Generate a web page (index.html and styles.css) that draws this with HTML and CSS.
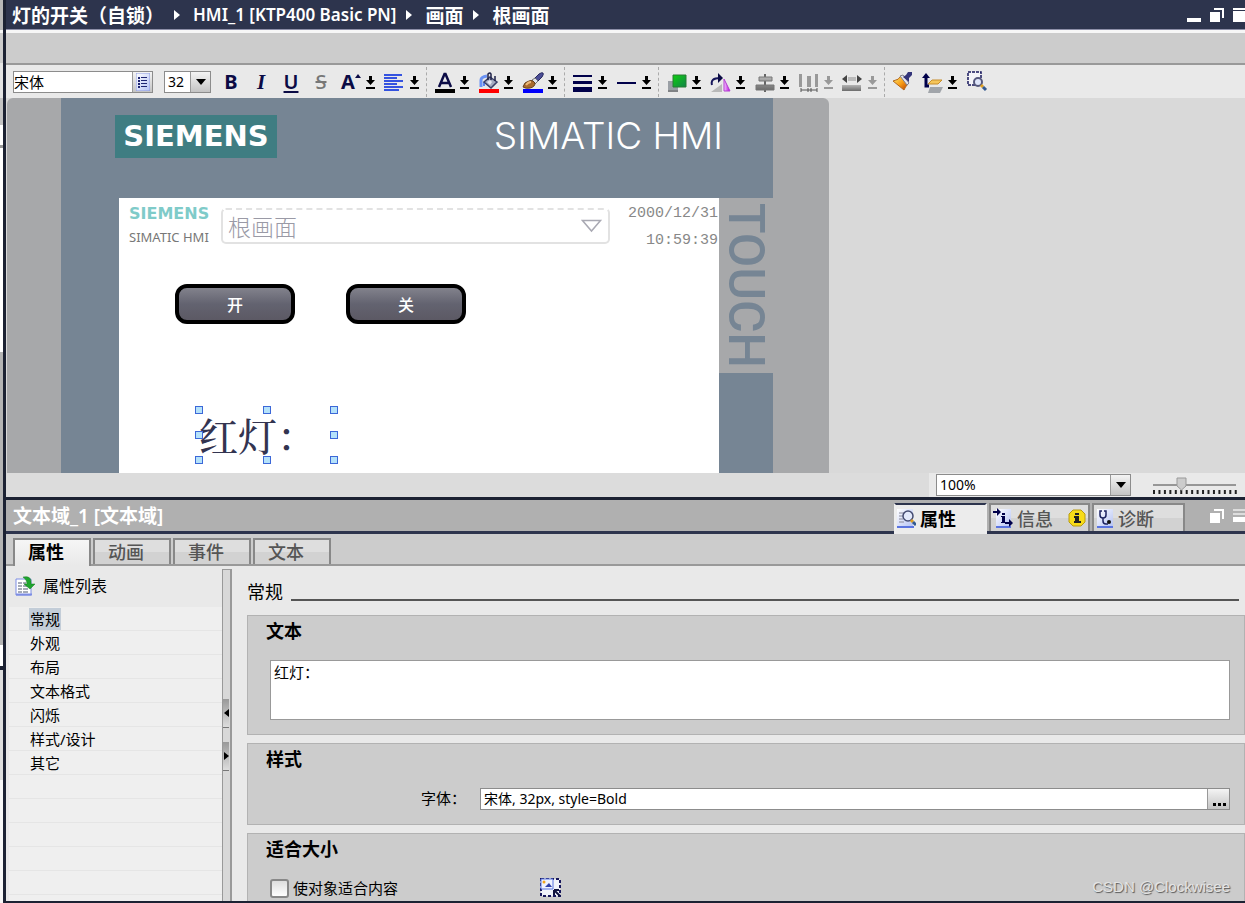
FILE: index.html
```html
<!DOCTYPE html>
<html lang="zh-CN">
<head>
<meta charset="utf-8">
<title>HMI_1 [KTP400 Basic PN]</title>
<link rel="stylesheet" href="styles.css">
</head>
<body>
<svg class="defs" aria-hidden="true">
  <defs>
    <linearGradient id="g-green" x1="0" y1="0" x2="1" y2="1"><stop offset="0" stop-color="#0fd00f"/><stop offset="1" stop-color="#12834a"/></linearGradient>
    <linearGradient id="g-steel" x1="0" y1="0" x2="0" y2="1"><stop offset="0" stop-color="#b4b4b4"/><stop offset="1" stop-color="#6c6c6c"/></linearGradient>
    <linearGradient id="g-violet" x1="0" y1="0" x2="1" y2="0"><stop offset="0" stop-color="#f7c8ff"/><stop offset="1" stop-color="#b400dc"/></linearGradient>
    <linearGradient id="g-fire" x1="0" y1="0" x2="1" y2="1"><stop offset="0" stop-color="#fff27a"/><stop offset=".55" stop-color="#f79a14"/><stop offset="1" stop-color="#b53a00"/></linearGradient>
    <linearGradient id="g-page" x1="0" y1="0" x2="1" y2="1"><stop offset="0" stop-color="#ffffff"/><stop offset="1" stop-color="#b4c2f4"/></linearGradient>
    <symbol id="drop" viewBox="0 0 12 22"><path d="M5 5h3v4h3l-4.500 5-4.500-5h3zM2 16h9v2H2z"/></symbol>
    <symbol id="tri" viewBox="0 0 10 6"><path d="M0 0h10L5 6z"/></symbol>
    <symbol id="restore" viewBox="0 0 14 14"><path d="M4 0h10v10h-2V2H4zM0 4h10v10H0z" fill="#fff"/></symbol>
  </defs>
</svg>
<div class="app">
  <div class="edge"></div>
  <main class="workspace">
    <header class="titlebar">
      <nav class="crumbs">
        <span class="cjk">灯的开关（自锁）</span><i class="chev"></i>
        <span class="latin">HMI_1 [KTP400 Basic PN]</span><i class="chev"></i>
        <span class="cjk">画面</span><i class="chev"></i>
        <span class="cjk">根画面</span>
      </nav>
      <div class="window-buttons">
        <button aria-label="最小化"><svg width="14" height="14"><path d="M0 10h14v4H0z" fill="#fff"/></svg></button>
        <button aria-label="还原"><svg width="14" height="14"><use href="#restore"/></svg></button>
        <button aria-label="最大化"><svg width="14" height="14"><path d="M0 0h14v2H0zM0 3h14v11H0z" fill="#fff"/></svg></button>
      </div>
    </header>
    <div class="band"></div>

    <div class="toolbar">
      <div class="combo font-combo">
        <input type="text" value="宋体" aria-label="字体名称">
        <button aria-label="选择字体"><svg width="14" height="18" viewBox="0 0 14 18"><rect x="0" y="0" width="14" height="18" rx="1" fill="url(#g-page)" stroke="#8d9be0"/><path d="M2 4h2v2H2zM5 4h6v1H5zM2 7h2v2H2zM5 7h6v1H5zM2 10h2v2H2zM5 10h6v1H5zM2 13h2v2H2zM5 13h6v1H5z" fill="#1d2472"/></svg></button>
      </div>
      <div class="combo size-combo">
        <select aria-label="字号"><option>32</option></select>
        <span class="arrow"><svg width="10" height="6"><use href="#tri"/></svg></span>
      </div>
      <div class="tools">
        <button class="tool letter bold" aria-label="粗体">B</button>
        <button class="tool letter italic" aria-label="斜体">I</button>
        <button class="tool letter under" aria-label="下划线">U</button>
        <button class="tool letter strike" aria-label="删除线">S</button>
        <div class="pair">
          <button class="tool grow" aria-label="字体大小">A<svg width="6" height="4"><path d="M3 0l3 4H0z" fill="#0b0b45"/></svg></button>
          <button class="drop" aria-label="更多"><svg><use href="#drop"/></svg></button>
        </div>
        <div class="pair">
          <button class="tool" aria-label="对齐"><svg><path d="M0 3h18v2H0zM0 6h13v2H0zM0 9h19v2H0zM0 12h13v2H0zM0 15h19v2H0zM0 18h15v2H0z" fill="#3553e0"/></svg></button>
          <button class="drop" aria-label="更多"><svg><use href="#drop"/></svg></button>
        </div>
        <i class="sep"></i>
        <div class="pair">
          <button class="tool" aria-label="文本颜色"><svg><path d="M5 16L10.500 3h1L17 16M7 12h8" fill="none" stroke="#0b0b45" stroke-width="2.500"/><path d="M1 18h20v4H1z"/></svg></button>
          <button class="drop" aria-label="更多"><svg><use href="#drop"/></svg></button>
        </div>
        <div class="pair">
          <button class="tool" aria-label="背景颜色"><svg><path d="M3 16V9q0-3 6-4" fill="none" stroke="#6a92f4" stroke-width="3"/><path d="M6 11v4" stroke="#5d86ef" stroke-width="2"/><path d="M12 6l7 5-6 6-7-6z" fill="#a4abc0" stroke="#3a4068" stroke-width="1.500"/><path d="M10 9V3q2-2 3 0v6M17 5v5" fill="none" stroke="#1e2148" stroke-width="1.500"/><path d="M12 9l-3 2 3 3 2-3z" fill="#e6e9f2"/><path d="M1 18h20v4H1z" fill="red"/></svg></button>
          <button class="drop" aria-label="更多"><svg><use href="#drop"/></svg></button>
        </div>
        <div class="pair">
          <button class="tool" aria-label="边框颜色"><svg><path d="M12 8l5-5q3-2 4-1t-1 4l-5 5z" fill="#4b4d96" stroke="#292b60"/><path d="M10 9l3-2 3 3-3 3z" fill="#dfe3ee" stroke="#777"/><path d="M1 16q1-5 6-6 2-1 4 0l2 2q0 4-5 5-4 1-7-1z" fill="#a86a2c" stroke="#66401c"/><path d="M4 14q2-3 5-3" stroke="#ecb978" fill="none" stroke-width="2"/><path d="M1 18h20v4H1z" fill="#0000fa"/></svg></button>
          <button class="drop" aria-label="更多"><svg><use href="#drop"/></svg></button>
        </div>
        <i class="sep"></i>
        <div class="pair">
          <button class="tool" aria-label="线宽"><svg><path d="M1 4h19v2H1zM1 10h19v3H1zM1 16h19v5H1z" fill="#00004a"/></svg></button>
          <button class="drop" aria-label="更多"><svg><use href="#drop"/></svg></button>
        </div>
        <div class="pair">
          <button class="tool" aria-label="线型"><svg><path d="M1 11h19v2H1z" fill="#00004a"/></svg></button>
          <button class="drop" aria-label="更多"><svg><use href="#drop"/></svg></button>
        </div>
        <i class="sep"></i>
        <div class="pair">
          <button class="tool" aria-label="层次"><svg><path d="M2 10h10v11H2z" fill="#9a9fa5"/><path d="M2 20h10" stroke="#666"/><path d="M7 4h13v12H7z" fill="url(#g-green)" stroke="#287a35"/></svg></button>
          <button class="drop" aria-label="更多"><svg><use href="#drop"/></svg></button>
        </div>
        <div class="pair">
          <button class="tool" aria-label="旋转"><svg><path d="M14 8v12h6z" fill="url(#g-violet)" stroke="#b33fd2"/><path d="M12 13v8H1z" fill="#b9b9b9"/><path d="M2 14Q0 7 10 7" fill="none" stroke="#17175c" stroke-width="2"/><path d="M8 2l5 5-5 5z" fill="#0b0b45"/></svg></button>
          <button class="drop" aria-label="更多"><svg><use href="#drop"/></svg></button>
        </div>
        <div class="pair">
          <button class="tool" aria-label="对齐对象"><svg><path d="M10 3h2v18h-2z" fill="#666"/><path d="M5 6h13v4H5zM2 14h18v5H2z" fill="url(#g-steel)" stroke="#777"/></svg></button>
          <button class="drop" aria-label="更多"><svg><use href="#drop"/></svg></button>
        </div>
        <div class="pair muted">
          <button class="tool" aria-label="分布"><svg><path d="M1 3h3v13H1zM9 5h4v11H9zM17 3h3v13h-3z" fill="#999"/><path d="M3 17v4M19 17v4M3 19h16M10 17v4M13 17v4" stroke="#555"/></svg></button>
          <button class="drop" aria-label="更多"><svg><use href="#drop"/></svg></button>
        </div>
        <div class="pair muted">
          <button class="tool" aria-label="宽度"><svg><path d="M0 8l5-4v8zM20 8l-5-4v8z" fill="#444"/><path d="M6 6h8v4H6z" fill="#bbb"/><path d="M0 14h19v6H0z" fill="url(#g-steel)"/></svg></button>
          <button class="drop" aria-label="更多"><svg><use href="#drop"/></svg></button>
        </div>
        <i class="sep"></i>
        <button class="tool" aria-label="格式刷"><svg><path d="M1 10q6-1 8-5l7 8q-3 3-4 6z" fill="url(#g-fire)" stroke="#b4681c"/><path d="M8 5l3-1 6 8-2 2z" fill="#e6e6ee" stroke="#80808c"/><path d="M11 6l3-2 2-3 4 0 0 3-3 3 0 4z" fill="#34357a"/></svg></button>
        <div class="pair">
          <button class="tool" aria-label="图层"><svg><path d="M8 16h13l-3 6H6z" fill="#a1a5aa"/><path d="M10 9h10l-4 4H6z" fill="#f6c65a" stroke="#c68d2c"/><path d="M4 7v8h3" fill="none" stroke="#00004a" stroke-width="3"/><path d="M4 2l4 5H0z" fill="#00004a"/></svg></button>
          <button class="drop" aria-label="更多"><svg><use href="#drop"/></svg></button>
        </div>
        <button class="tool" aria-label="缩放选区"><svg><path d="M2 1h13v13H2z" fill="#f4f4f8" stroke="#17175c" stroke-width="1.500" stroke-dasharray="3 1"/><circle cx="12" cy="11" r="4" fill="#dfe6fa" stroke="#55587c" stroke-width="2"/><path d="M15 14l2 2" stroke="#e0a020" stroke-width="3"/><path d="M17 16l3 3" stroke="#33598f" stroke-width="3"/></svg></button>
      </div>
    </div>

    <section class="stage">
      <div class="device">
        <div class="bezel">
          <div class="brand">
            <span class="siemens">SIEMENS</span>
            <span class="simatic">SIMATIC HMI</span>
          </div>
          <div class="panel">
            <div class="screen">
              <div class="hmi-logo"><b>SIEMENS</b><span>SIMATIC HMI</span></div>
              <div class="hmi-select"><span>根画面</span><svg width="22" height="14"><path d="M1.500 1.500h18L10.500 12z" fill="#fff" stroke="#a9a9b3" stroke-width="1.500"/></svg></div>
              <div class="hmi-clock"><span>2000/12/31</span><span>10:59:39</span></div>
              <button class="hmi-button on">开</button>
              <button class="hmi-button off">关</button>
              <div class="selection">红灯：
                <i class="h nw"></i><i class="h n"></i><i class="h ne"></i>
                <i class="h w"></i><i class="h e"></i>
                <i class="h sw"></i><i class="h s"></i><i class="h se"></i>
              </div>
            </div>
            <div class="touch"><span>TOUCH</span></div>
          </div>
        </div>
      </div>
    </section>

    <div class="zoombar">
      <div class="zoom-tools">
        <div class="combo zoom-combo">
          <select aria-label="缩放"><option>100%</option></select>
          <span class="arrow"><svg width="10" height="6"><use href="#tri"/></svg></span>
        </div>
        <svg class="slider" width="86" height="20" viewBox="0 0 86 20"><path d="M1 10h83" stroke="#444" stroke-width="1"/><path d="M1 17h84" stroke="#222" stroke-width="4" stroke-dasharray="2 3.450"/><path d="M25 3h9v8l-4.500 4-4.500-4z" fill="#ccc" stroke="#999"/></svg>
      </div>
    </div>

    <section class="inspector">
      <header class="inspector-head">
        <h1>文本域_1 [文本域]</h1>
        <div class="view-tabs">
          <button class="view-tab active"><svg width="20" height="20"><path d="M1 1h16v18H1z" fill="url(#g-page)"/><path d="M1 19h17" stroke="#5a74e0" stroke-width="2"/><path d="M3 5h5M3 8h4M3 11h4M3 14h5" stroke="#889"/><circle cx="12" cy="8" r="5" fill="#e3e9fb" stroke="#444b70" stroke-width="1.500"/><path d="M15 12l2 2" stroke="#e0a020" stroke-width="3"/><path d="M17 14l3 3" stroke="#33598f" stroke-width="3"/></svg>属性</button>
          <button class="view-tab info"><svg width="20" height="20"><path d="M3 1h15v18H3z" fill="url(#g-page)"/><path d="M3 19h15" stroke="#5a74e0" stroke-width="2"/><path d="M0 3h4V0l4 4-4 4V5H0zM12 14h4v-3l4 4-4 4v-3h-4z" fill="#00004a"/><path d="M9 5h3v2H9zM8 8h4v6h2v1H8v-1h1V9H8z" fill="#00004a"/></svg>信息<svg class="badge" width="18" height="18"><path d="M5 1h8l4 4v8l-4 4H5l-4-4V5z" fill="#f8dc18" stroke="#b89b10"/><path d="M7 4h4v2H7zM6 7h5v5h2v2H6v-2h1V9H6z" fill="#222"/></svg></button>
          <button class="view-tab diag"><svg width="18" height="20"><path d="M1 1h16v18H1z" fill="url(#g-page)"/><path d="M1 19h16" stroke="#5a74e0" stroke-width="2"/><path d="M6 3H4v4q0 3 3 3t3-3V3H8M7 10v3q0 3 3 3h2" fill="none" stroke="#1c2260" stroke-width="1.500"/><circle cx="13" cy="14" r="2" fill="#111"/></svg>诊断</button>
        </div>
        <div class="window-buttons">
          <button aria-label="浮动"><svg width="14" height="14"><use href="#restore"/></svg></button>
          <button aria-label="收起"><svg width="14" height="14"><path d="M0 1h14M0 5h14" stroke="#ddd" stroke-width="2"/><path d="M0 8h14v5H0z" fill="#fff"/></svg></button>
        </div>
      </header>
      <nav class="tabs">
        <button class="tab active">属性</button><button class="tab">动画</button><button class="tab">事件</button><button class="tab">文本</button>
      </nav>
      <div class="inspector-body">
        <aside class="props">
          <div class="props-head"><svg width="20" height="20"><path d="M1 3h15v16H1z" fill="#fff" stroke="#7d8de4"/><path d="M1 18.500h16" stroke="#7d8de4" stroke-width="2"/><path d="M3 7h4M8 7h3M3 10h4M8 10h5M3 13h4M8 13h5M3 16h4M8 16h5" stroke="#4d5870"/><path d="M8 1q9-2 8 7h4l-5 5-6-5h3q0-4-4-7z" fill="#1fa52e" stroke="#137a20" stroke-width=".5"/></svg>属性列表</div>
          <ul>
            <li class="current"><a href="#general">常规</a></li>
            <li><a href="#general">外观</a></li>
            <li><a href="#general">布局</a></li>
            <li><a href="#general">文本格式</a></li>
            <li><a href="#general">闪烁</a></li>
            <li><a href="#general">样式/设计</a></li>
            <li><a href="#general">其它</a></li>
          </ul>
        </aside>
        <div class="splitter">
          <button aria-label="向左折叠"><svg width="5" height="8"><path d="M5 0v8L0 4z"/></svg></button>
          <button aria-label="向右折叠"><svg width="5" height="8"><path d="M0 0v8l5-4z"/></svg></button>
        </div>
        <div class="form" id="general">
          <h2>常规</h2>
          <section class="card">
            <h3><label for="txt">文本</label></h3>
            <textarea id="txt">红灯：</textarea>
          </section>
          <section class="card">
            <h3>样式</h3>
            <div class="field">
              <label for="font">字体：</label>
              <div class="combo wide"><input id="font" type="text" value="宋体, 32px, style=Bold"><button aria-label="浏览"><svg width="14" height="3"><path d="M1 0h3v3H1zM6 0h3v3H6zM11 0h3v3h-3z"/></svg></button></div>
            </div>
          </section>
          <section class="card last">
            <h3>适合大小</h3>
            <div class="check">
              <input type="checkbox" id="fit"><label for="fit">使对象适合内容</label>
              <svg width="22" height="20"><path d="M1 1h19v17H1z" fill="#f1f3fb" stroke="#17175c" stroke-width="2" stroke-dasharray="3 2"/><path d="M1 1h12v10H1z" fill="#eef2ff" stroke="#5a74e0"/><circle cx="4" cy="4" r="1.500" fill="#f3a51b"/><path d="M5 9l4-4 3 4z" fill="#2f3fa8"/><path d="M14 12h5M14 12v5M14 12l6 6" stroke="#10123c" stroke-width="2"/></svg>
            </div>
          </section>
        </div>
      </div>
    </section>
  </main>
</div>
<div class="watermark">CSDN @Clockwisee</div>
</body>
</html>
```
FILE: styles.css
```css
* { box-sizing: border-box; }

body {
  margin: 0;
  overflow: hidden;
  font: 15px/20px "Noto Sans", "Noto Sans CJK SC", sans-serif;
  color: #000;
}

button, input, select, textarea {
  margin: 0;
  padding: 0;
  border: 0;
  border-radius: 0;
  background: none;
  font: inherit;
  color: inherit;
}

svg { display: block; flex: none; }
.defs { position: absolute; width: 0; height: 0; }

.app { display: flex; height: 100vh; background: #e9e9e9; }
.edge {
  flex: none;
  width: 6px;
  border-right: 3px solid #1c2233;
  background: linear-gradient(#b8b8b8 0 30px, #f6f6f6 30px 33px, #ccc 33px 63px, #e4e4e4 63px 98px, #c4c4c4 98px 125px, #fff 125px 145px, #999 145px 148px, #fff 148px 352px, #b4b4b4 352px 645px, #fff 645px 666px, #1c2233 666px 670px, #ddd 670px 780px, #f6f6f6 780px);
}
.workspace { flex: 1; min-width: 0; display: flex; flex-direction: column; }

/* title bar */
.titlebar {
  flex: none;
  display: flex;
  align-items: center;
  justify-content: space-between;
  height: 30px;
  overflow: hidden;
  border-bottom: 1px solid #8d8fa8;
  background: #2d344d;
  color: #fff;
}
.crumbs { display: flex; align-items: center; padding-left: 6px; white-space: nowrap; }
.crumbs .cjk { font: bold 19px/28px "Noto Sans CJK SC", sans-serif; }
.crumbs .latin { font-size: 17px; font-weight: 600; }
.chev { margin: 0 13px 0 10px; border: 5px solid transparent; border-left: 6px solid #fff; border-right: 0; }
.window-buttons { display: flex; gap: 9px; flex: none; margin-right: -2px; }
.window-buttons button { width: 14px; height: 14px; }

.band { flex: none; height: 35px; border-top: 3px solid #f6f6f6; border-bottom: 2px solid #999; background: #ccc; }

/* toolbar */
.toolbar { flex: none; display: flex; align-items: center; height: 33px; padding-left: 7px; background: #e9e9e9; }
.combo { position: relative; display: flex; height: 22px; border: 1px solid #8c8c8c; background: #fff; }
.combo input, .combo select { flex: 1; min-width: 0; appearance: none; }
.combo button, .combo .arrow {
  display: flex;
  align-items: center;
  justify-content: center;
  width: 20px;
  border-left: 1px solid #999;
  background: linear-gradient(#f4f4f4, #c4c4c4);
}
.combo .arrow { position: absolute; top: 0; right: 0; bottom: 0; pointer-events: none; }
.font-combo { width: 140px; margin-right: 11px; }
.size-combo { width: 47px; margin-right: 9px; }
.size-combo select { padding-left: 3px; font-size: 14px; }
.tools { display: flex; align-items: center; gap: 8px; }
.tool { flex: none; width: 22px; height: 22px; text-align: center; }
.tool svg { width: 22px; height: 22px; }
.pair { display: flex; gap: 2px; }
.drop, .drop svg { width: 12px; height: 22px; }
.muted .drop { fill: #999; }
.letter { font: bold 20px/22px "Noto Sans", sans-serif; color: #0b0b45; }
.italic { font: italic bold 21px/22px "Liberation Serif", serif; }
.under { font-weight: 600; text-decoration: underline; text-underline-offset: 2px; text-decoration-thickness: 2px; }
.strike { color: #777; font-weight: 500; text-decoration: line-through; }
.grow { display: flex; justify-content: center; font: bold 20px/22px "Noto Sans", sans-serif; color: #0b0b45; }
.grow svg { width: 6px; height: 4px; margin-top: 3px; }
.sep { width: 2px; height: 30px; margin: 0 -2px; border-left: 1px dashed #aaa; }

/* screen editor */
.stage { flex: 1 1 0; min-height: 0; overflow: hidden; background: #d9d9d9; }
.device { width: 822px; height: 600px; margin-left: 1px; padding: 0 56px 0 54px; border-radius: 6px; background: #a7a8aa; }
.bezel { height: 100%; background: #768594; }
.brand { display: flex; align-items: center; justify-content: space-between; height: 100px; padding: 0 50px 24px 54px; }
.siemens {
  width: 162px;
  background: #3f7d82;
  color: #fff;
  font: bold 29px/43px "DejaVu Sans", sans-serif;
  text-align: center;
}
.simatic { color: #fff; font: 300 37px/44px Inter, sans-serif; }
.panel { display: flex; justify-content: space-between; height: 480px; padding-left: 58px; }
.screen { position: relative; width: 600px; background: #fff; }
.touch {
  width: 54px;
  height: 175px;
  padding: 5px 0;
  background: #a7a8aa;
  color: #768594;
  font: 500 50px/54px Roboto, sans-serif;
  writing-mode: vertical-rl;
}

/* objects placed on the HMI canvas */
.hmi-logo { position: absolute; left: 10px; top: 6px; display: flex; flex-direction: column; }
.hmi-logo b { font: bold 16px/20px "DejaVu Sans", sans-serif; color: #7fcbc9; }
.hmi-logo span { font-size: 13px; line-height: 26px; color: #777; white-space: nowrap; }
.hmi-select {
  position: absolute; left: 102px; top: 10px;
  display: flex; align-items: center; justify-content: space-between;
  width: 389px; height: 36px; padding: 0 5px 0 5px;
  border: 2px solid #e2e2e2; border-top-style: dashed; border-radius: 5px;
  font: 300 23px/32px "Noto Sans CJK SC", sans-serif; color: #9a9aa6;
}
.hmi-clock {
  position: absolute; right: 1px; top: 2px;
  display: flex; flex-direction: column; align-items: flex-end;
  font: 15px/27px "Liberation Mono", monospace; color: #888;
}
.hmi-button {
  position: absolute; top: 86px;
  width: 120px; height: 40px;
  border: 4px solid #000; border-radius: 12px;
  background: linear-gradient(#82828c, #636370 50%, #5c5964);
  color: #fff; font: 500 16px/28px "Noto Sans CJK SC", sans-serif;
}
.hmi-button.on { left: 56px; }
.hmi-button.off { left: 227px; }
.selection {
  position: absolute; left: 80px; top: 212px;
  width: 135px; height: 50px;
  font: 500 39px/48px "Noto Serif CJK SC", "Noto Sans CJK SC", serif;
  color: #333450; white-space: nowrap;
}
.h { position: absolute; width: 8px; height: 8px; margin: -4px; border: 1px solid #3c68d8; background: #b5e2fa; }
.nw, .n, .ne { top: 0; }
.w, .e { top: 50%; }
.sw, .s, .se { top: 100%; }
.nw, .w, .sw { left: 0; }
.n, .s { left: 50%; }
.ne, .e, .se { left: 100%; }

/* zoom bar */
.zoombar { flex: none; display: flex; justify-content: flex-end; height: 24px; background: #dcdcdc; }
.zoom-tools { display: flex; align-items: center; gap: 21px; padding: 0 7px; background: #e9e9e9; }
.zoom-combo { width: 195px; }
.zoom-combo select { padding-left: 3px; font-size: 14px; }

/* inspector */
.inspector { flex: none; border-top: 3px solid #1c2233; border-bottom: 2px solid #1c2233; }
.inspector-head { display: flex; align-items: center; height: 34px; border-bottom: 3px solid #2d344d; background: #b0b0b0; color: #fff; }
.inspector-head h1 { flex: 1; margin: 0; padding-left: 7px; font-size: 19px; line-height: 30px; font-weight: 600; }
.view-tabs { display: flex; gap: 2px; align-self: flex-end; height: 28px; margin-right: 25px; }
.view-tab, .tab {
  display: flex;
  align-items: center;
  border: 2px solid #888;
  border-bottom: 0;
  background: linear-gradient(#dedede 50%, #d2d2d2 50%);
  color: #555;
  font: 500 18px/24px "Noto Sans CJK SC", sans-serif;
}
.view-tab { gap: 4px; width: 93px; padding: 0 2px; }
.view-tab.info { width: 101px; }
.badge { margin-left: auto; }
.view-tab.active { height: 31px; padding: 0 0 4px; border-color: #2d344d #eee; background: #ececec; color: #000; font-weight: 700; }

.tabs { display: flex; gap: 2px; align-items: flex-end; height: 32px; padding-left: 7px; border-bottom: 2px solid #999; background: #ccc; }
.tab { width: 78px; height: 26px; padding: 0 0 3px 13px; }
.tab.active { height: 28px; padding-bottom: 5px; margin-bottom: -2px; background: linear-gradient(#f6f6f6, #e9e9e9); color: #000; font-weight: 700; }

.inspector-body { display: flex; background: #e9e9e9; }
.props { flex: none; width: 216px; padding-left: 3px; }
.props-head { display: flex; align-items: center; gap: 8px; height: 41px; padding: 0 0 2px 6px; font-size: 16px; }
.props ul {
  height: 294px;
  margin: 0;
  padding: 0 0 0 20px;
  list-style: none;
  background: repeating-linear-gradient(#efefef 0 23px, #e5e5e5 23px 24px);
}
.props li { height: 24px; line-height: 24px; }
.props a { display: inline-block; padding: 0 1px; line-height: 22px; color: inherit; text-decoration: none; }
.current a { background: #c3cdd8; }
.splitter {
  flex: none;
  display: flex;
  flex-direction: column;
  gap: 14px;
  width: 10px;
  margin-top: 3px;
  padding-top: 129px;
  padding-right: 1px;
  border: 1px solid #999;
  border-bottom: 0;
  border-right-width: 2px;
  background: #d8d8d8;
}
.splitter button { display: flex; align-items: center; justify-content: center; height: 29px; border-bottom: 1px solid #777; background: linear-gradient(#999, #ddd); }

.form { flex: 1; min-width: 0; padding: 9px 0 0 15px; }
.form h2 { display: flex; align-items: center; gap: 8px; margin: 0 6px 8px 0; font: 18px/32px "Noto Sans CJK SC", sans-serif; }
.form h2::after { content: ""; flex: 1; height: 2px; margin-top: 18px; background: #555; }
.card { margin-bottom: 8px; padding: 0 14px 14px 22px; border: 1px solid #b2b2b2; background: #ccc; }
.card h3 { margin: 0 -4px 15px; font: bold 18px/29px "Noto Sans CJK SC", sans-serif; }
.card textarea { display: block; width: 100%; height: 60px; padding: 1px 3px; border: 1px solid #999; background: #fff; resize: none; }
.field { display: grid; grid-template-columns: 210px 1fr; }
.field label { padding-left: 151px; white-space: nowrap; }
.wide input { padding-left: 3px; font-size: 14px; }
.wide button { width: 22px; align-items: flex-end; padding-bottom: 3px; }
.card.last { margin: 0; padding-bottom: 3px; border-bottom: 0; }
.check { display: flex; align-items: center; gap: 4px; }
.check input { appearance: none; width: 19px; height: 19px; border: 2px solid #888; border-radius: 3px; background: linear-gradient(#ddd, #fff); }
.check label { flex: 0 0 243px; }

.watermark {
  position: absolute;
  right: 15px;
  bottom: 6px;
  font: 15px/20px "Liberation Sans", sans-serif;
  color: #e4e4e4;
  text-shadow: 1px 1px 1px #555;
}
```
